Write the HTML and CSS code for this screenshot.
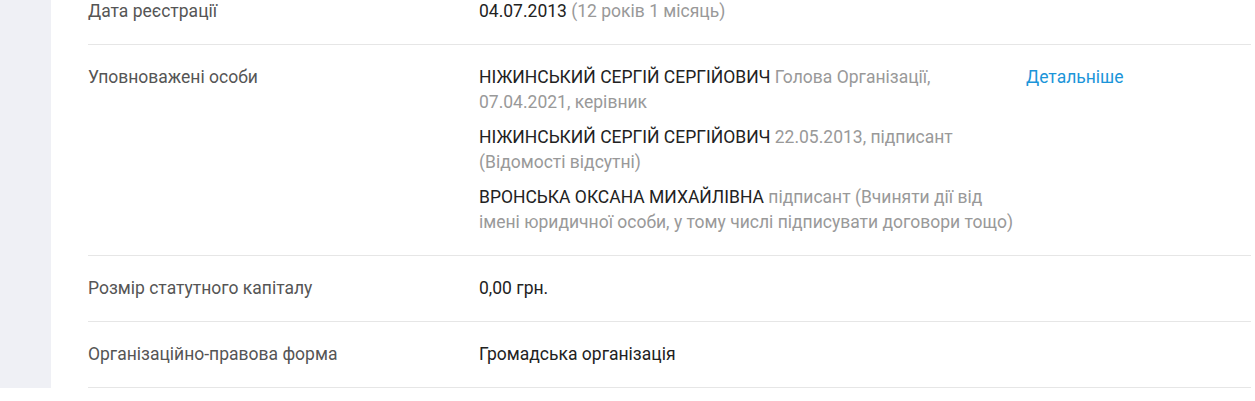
FILE: index.html
```html
<!DOCTYPE html>
<html lang="uk">
<head>
    <meta charset="UTF-8">
    <meta name="viewport" content="width=device-width, initial-scale=1.0">
    <title>Реквізити організації</title>
    <link rel="stylesheet" href="styles.css">
</head>
<body>
    <div class="layout">
        <aside class="sidebar"></aside>
        <main class="card">
            <div class="row">
                <div class="label">Дата реєстрації</div>
                <div class="value">04.07.2013 <span class="muted">(12 років 1 місяць)</span></div>
            </div>
            <div class="row">
                <div class="label">Уповноважені особи</div>
                <div class="value">
                    <div class="person">НІЖИНСЬКИЙ СЕРГІЙ СЕРГІЙОВИЧ <span class="muted">Голова Організації, 07.04.2021, керівник</span></div>
                    <div class="person">НІЖИНСЬКИЙ СЕРГІЙ СЕРГІЙОВИЧ <span class="muted">22.05.2013, підписант (Відомості відсутні)</span></div>
                    <div class="person">ВРОНСЬКА ОКСАНА МИХАЙЛІВНА <span class="muted">підписант (Вчиняти дії від імені юридичної особи, у тому числі підписувати договори тощо)</span></div>
                </div>
                <div class="extra"><a href="#" class="more">Детальніше</a></div>
            </div>
            <div class="row">
                <div class="label">Розмір статутного капіталу</div>
                <div class="value">0,00 грн.</div>
            </div>
            <div class="row">
                <div class="label">Організаційно-правова форма</div>
                <div class="value">Громадська організація</div>
            </div>
        </main>
    </div>
</body>
</html>
```

FILE: styles.css
```css
body {
    margin: 0;
    background: #fff;
    font-family: Roboto, "Liberation Sans", sans-serif;
    font-size: 17.5px;
    line-height: 25px;
    color: #222;
    overflow: hidden;
}
.layout {
    display: flex;
    min-height: 401px;
    margin-top: -21px;
}
.sidebar {
    width: 51px;
    flex-shrink: 0;
    background: #eff0f5;
}
.card {
    flex: 1;
    padding: 0 4px 0 37px;
}
.row {
    display: grid;
    grid-template-columns: 391px 547px 1fr;
    padding: 20px 0;
    border-bottom: 1px solid #e6e6e6;
}
.label {
    color: #555;
}
.value {
    padding-right: 10px;
}
.muted {
    color: #999;
}
.person + .person {
    margin-top: 10px;
}
.more {
    color: #1b95d9;
    text-decoration: none;
}
```
